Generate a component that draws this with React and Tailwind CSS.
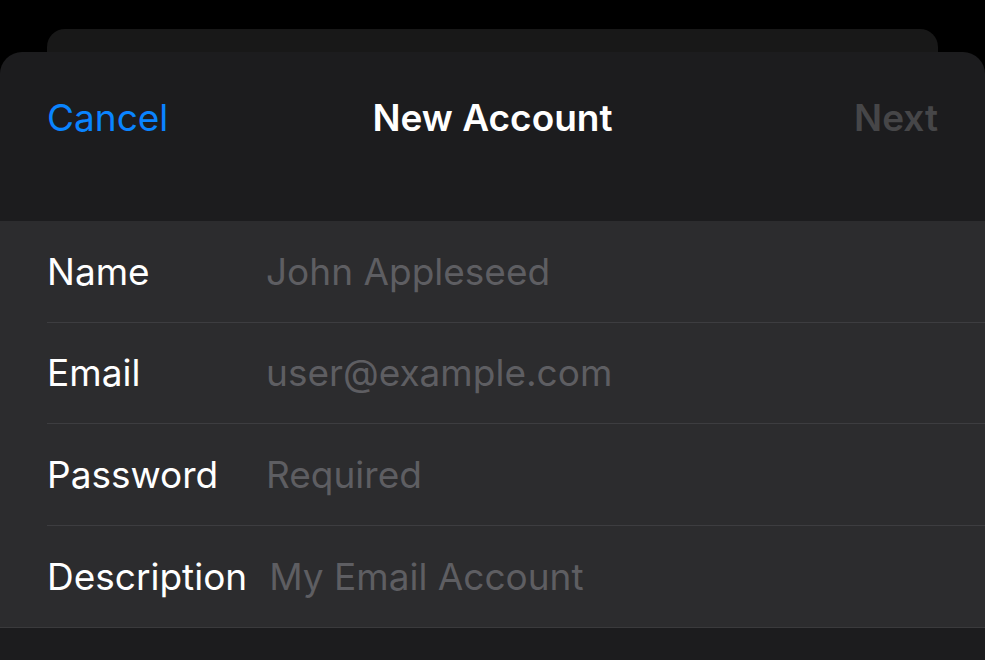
const fields = [
  { label: 'Name', placeholder: 'John Appleseed' },
  { label: 'Email', placeholder: 'user@example.com' },
  { label: 'Password', placeholder: 'Required' },
  { label: 'Description', placeholder: 'My Email Account' },
];

function FieldRow({ label, placeholder, last }) {
  return (
    <div className="flex h-[101.5px] items-center pl-[47px]">
      <div
        className={`flex h-full flex-1 items-center ${
          last ? '' : 'border-b border-[#3d3d40]'
        }`}
      >
        <span className="min-w-[219px] pr-[22px] text-[37px] text-white">{label}</span>
        <span className="text-[37px] text-[#5e5e62]">{placeholder}</span>
      </div>
    </div>
  );
}

export default function App() {
  return (
    <div
      className="flex h-[660px] w-[985px] flex-col overflow-hidden bg-black"
      style={{ fontFamily: 'Inter, "Noto Sans", sans-serif' }}
    >
      <div className="mx-[47px] mt-[29px] h-[40px] shrink-0 rounded-t-[18px] bg-[#181818]" />
      <div className="-mt-[17px] flex flex-1 flex-col rounded-t-[22px] bg-[#1c1c1e]">
        <header className="grid h-[169px] grid-cols-[1fr_auto_1fr] items-start px-[47px] pt-[38px]">
          <button className="justify-self-start text-[37px] text-[#0a84ff]">Cancel</button>
          <h1 className="text-[37px] font-semibold text-white">New Account</h1>
          <button className="justify-self-end text-[37px] font-semibold text-[#464648]">Next</button>
        </header>
        <div className="bg-[#2c2c2e]">
          {fields.map((f, i) => (
            <FieldRow key={f.label} {...f} last={i === fields.length - 1} />
          ))}
        </div>
        <div className="h-px bg-[#3a3a3c]" />
      </div>
    </div>
  );
}
